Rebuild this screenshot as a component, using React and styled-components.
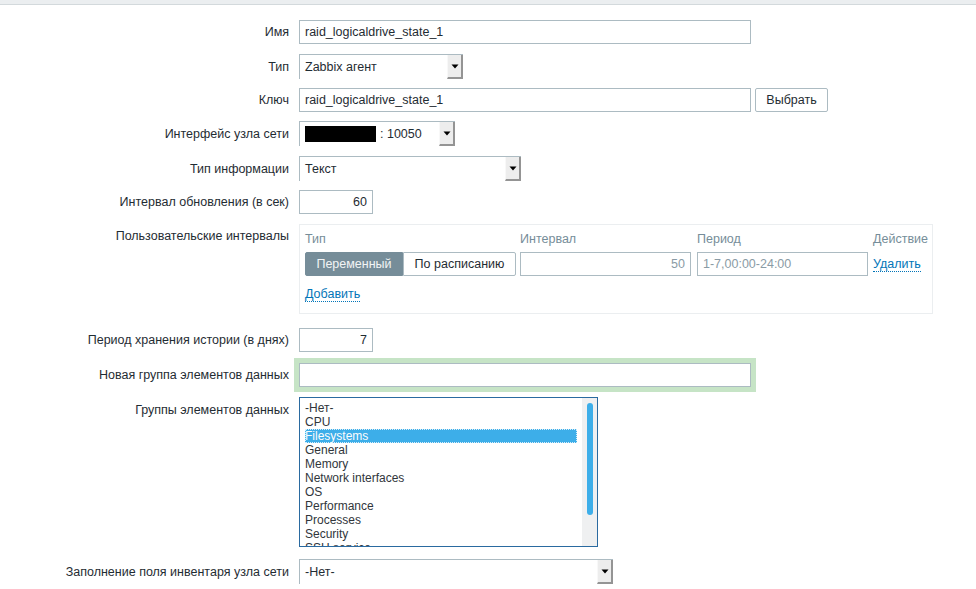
import React from 'react';
import styled, { createGlobalStyle } from 'styled-components';

const Global = createGlobalStyle`
  html, body { margin: 0; padding: 0; background: #fff; }
  body {
    font-family: "Liberation Sans", Arial, sans-serif;
    font-size: 12.5px;
    color: #1f2c33;
  }
  * { box-sizing: border-box; }
`;

const TopBar = styled.div`
  height: 5px;
  background: #ebeef0;
  border-bottom: 1px solid #d3d9dc;
`;

const Form = styled.div`
  display: flex;
  flex-direction: column;
  padding-top: 15px;
`;

const Row = styled.div`
  display: grid;
  grid-template-columns: 289px auto;
  column-gap: 10px;
  align-items: ${(p) => (p.$top ? 'start' : 'center')};
  margin-top: ${(p) => (p.$mt ?? 10)}px;
`;

const Label = styled.div`
  text-align: right;
  line-height: 14px;
  white-space: nowrap;
  padding-top: ${(p) => p.$pt || 0}px;
`;

const Field = styled.div`
  display: flex;
  align-items: center;
  gap: ${(p) => p.$gap || 0}px;
  justify-self: start;
`;

const TextInput = styled.input`
  width: ${(p) => p.$w}px;
  height: 24px;
  border: 1px solid #acbbc2;
  border-radius: 0;
  background: #fff;
  padding: 0 5px;
  margin: 0;
  font: inherit;
  color: ${(p) => (p.$muted ? '#8a9ba5' : '#1f2c33')};
  text-align: ${(p) => (p.$right ? 'right' : 'left')};
  outline: none;
  box-shadow: ${(p) => (p.$glow ? '0 0 0 5px #c6e4c6' : 'none')};
`;

const Button = styled.div`
  width: 73px;
  height: 24px;
  border: 1px solid #acbbc2;
  border-radius: 2px;
  background: #fff;
  display: flex;
  align-items: center;
  justify-content: center;
`;

const SelectBox = styled.div`
  width: ${(p) => p.$w}px;
  height: 25px;
  border: 1px solid #acbbc2;
  border-right: none;
  border-bottom: none;
  background: #fff;
  display: flex;
  align-items: stretch;
`;

const SelectText = styled.div`
  flex: 1;
  display: flex;
  align-items: center;
  padding-left: 5px;
  white-space: nowrap;
`;

const SelectArrow = styled.div`
  width: 16px;
  background: #ededed;
  border-right: 2px solid #949494;
  border-bottom: 2px solid #949494;
  border-left: 1px solid #f8f8f8;
  display: flex;
  align-items: center;
  justify-content: center;
`;

const Masked = styled.span`
  display: inline-block;
  width: 71px;
  height: 16px;
  background: #000;
  margin-right: 4px;
`;

const IntervalBox = styled.div`
  width: 634px;
  border: 1px solid #ebeef0;
  padding: 7px 5px 11px;
`;

const IntervalGrid = styled.div`
  display: grid;
  grid-template-columns: 215px 177px 176px auto;
  row-gap: 6px;
  align-items: center;
`;

const Th = styled.div`
  color: #768d99;
  line-height: 14px;
  white-space: nowrap;
`;

const Segmented = styled.div`
  display: flex;
  height: 24px;
`;

const SegButton = styled.div`
  width: ${(p) => p.$w}px;
  border: 1px solid ${(p) => (p.$active ? '#768d99' : '#acbbc2')};
  background: ${(p) => (p.$active ? '#768d99' : '#fff')};
  color: ${(p) => (p.$active ? '#f2f4f5' : '#1f2c33')};
  display: flex;
  align-items: center;
  justify-content: center;
  border-radius: ${(p) => (p.$first ? '2px 0 0 2px' : '0 2px 2px 0')};
  white-space: nowrap;
`;

const Link = styled.span`
  color: #0275b8;
  border-bottom: 1px dotted #0275b8;
  line-height: 13px;
  display: inline-block;
`;

const AddRow = styled.div`
  margin-top: 11px;
  line-height: 14px;
`;

const ListBox = styled.div`
  width: 299px;
  height: 150px;
  border: 1px solid #2a6aa0;
  background: #fff;
  display: flex;
  overflow: hidden;
`;

const ListItems = styled.div`
  flex: 1;
  height: 148px;
  padding: 3px 5px 0 5px;
  overflow: hidden;
  color: #31363b;
  font-size: 12px;
`;

const ListItem = styled.div`
  height: 14px;
  line-height: 14px;
  white-space: nowrap;
  background: ${(p) => (p.$selected ? '#3daee9' : 'transparent')};
  color: ${(p) => (p.$selected ? '#fcfcfc' : 'inherit')};
  outline: ${(p) => (p.$selected ? '1px dotted #d8eefa' : 'none')};
  outline-offset: -1px;
`;

const ScrollTrack = styled.div`
  width: 15px;
  background: #eff0f1;
  display: flex;
  justify-content: center;
  padding-top: 5px;
`;

const ScrollThumb = styled.div`
  width: 6px;
  height: 112px;
  border-radius: 3px;
  background: #3daee9;
`;

const Arrow = () => (
  <svg width="8" height="6" viewBox="0 0 8 6">
    <path d="M0.5 1.5 H7.5 L4 5.5 Z" fill="#000" />
  </svg>
);

const Select = ({ w, children }) => (
  <SelectBox $w={w}>
    <SelectText>{children}</SelectText>
    <SelectArrow>
      <Arrow />
    </SelectArrow>
  </SelectBox>
);

const groups = [
  '-Нет-',
  'CPU',
  'Filesystems',
  'General',
  'Memory',
  'Network interfaces',
  'OS',
  'Performance',
  'Processes',
  'Security',
  'SSH service',
];

export default function App() {
  return (
    <>
      <Global />
      <TopBar />
      <Form>
        <Row $mt={0}>
          <Label>Имя</Label>
          <Field>
            <TextInput $w={452} defaultValue="raid_logicaldrive_state_1" />
          </Field>
        </Row>
        <Row>
          <Label>Тип</Label>
          <Field>
            <Select w={164}>Zabbix агент</Select>
          </Field>
        </Row>
        <Row $mt={9}>
          <Label>Ключ</Label>
          <Field $gap={4}>
            <TextInput $w={452} defaultValue="raid_logicaldrive_state_1" />
            <Button>Выбрать</Button>
          </Field>
        </Row>
        <Row $mt={9}>
          <Label>Интерфейс узла сети</Label>
          <Field>
            <Select w={156}>
              <Masked />: 10050
            </Select>
          </Field>
        </Row>
        <Row>
          <Label>Тип информации</Label>
          <Field>
            <Select w={222}>Текст</Select>
          </Field>
        </Row>
        <Row $mt={9}>
          <Label>Интервал обновления (в сек)</Label>
          <Field>
            <TextInput $w={74} $right defaultValue="60" />
          </Field>
        </Row>
        <Row $top>
          <Label $pt={5}>Пользовательские интервалы</Label>
          <IntervalBox>
            <IntervalGrid>
              <Th>Тип</Th>
              <Th>Интервал</Th>
              <Th>Период</Th>
              <Th>Действие</Th>
              <Segmented>
                <SegButton $w={98} $active $first>Переменный</SegButton>
                <SegButton $w={113}>По расписанию</SegButton>
              </Segmented>
              <TextInput $w={171} $right $muted defaultValue="50" />
              <TextInput $w={171} $muted defaultValue="1-7,00:00-24:00" />
              <div>
                <Link>Удалить</Link>
              </div>
            </IntervalGrid>
            <AddRow>
              <Link>Добавить</Link>
            </AddRow>
          </IntervalBox>
        </Row>
        <Row $mt={14}>
          <Label>Период хранения истории (в днях)</Label>
          <Field>
            <TextInput $w={74} $right defaultValue="7" />
          </Field>
        </Row>
        <Row $mt={11}>
          <Label>Новая группа элементов данных</Label>
          <Field>
            <TextInput $w={452} $glow defaultValue="" />
          </Field>
        </Row>
        <Row $top $mt={10}>
          <Label $pt={6}>Группы элементов данных</Label>
          <ListBox>
            <ListItems>
              {groups.map((g) => (
                <ListItem key={g} $selected={g === 'Filesystems'}>
                  {g}
                </ListItem>
              ))}
            </ListItems>
            <ScrollTrack>
              <ScrollThumb />
            </ScrollTrack>
          </ListBox>
        </Row>
        <Row $mt={12}>
          <Label>Заполнение поля инвентаря узла сети</Label>
          <Field>
            <Select w={314}>-Нет-</Select>
          </Field>
        </Row>
      </Form>
    </>
  );
}
